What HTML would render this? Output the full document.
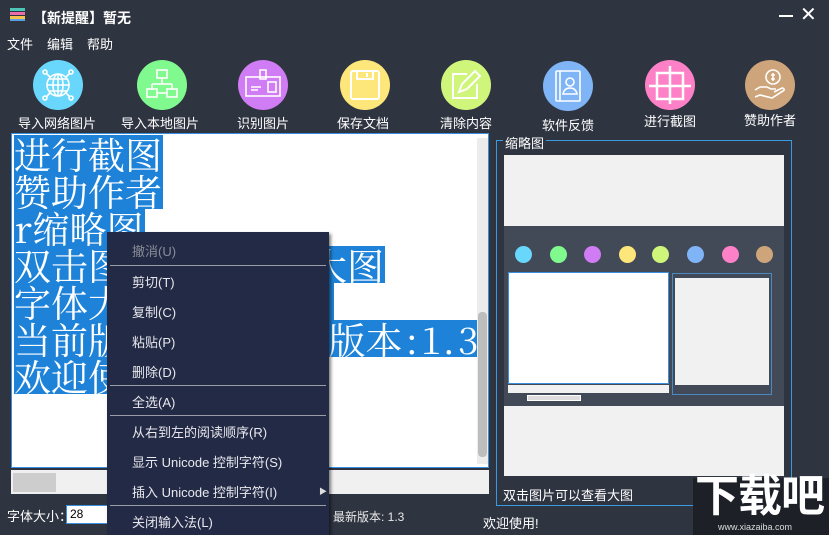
<!DOCTYPE html>
<html><head><meta charset="utf-8"><style>
*{margin:0;padding:0;box-sizing:border-box}
html,body{width:829px;height:535px;overflow:hidden}
body{background:#2f3441;position:relative;font-family:"Liberation Sans","Noto Sans CJK SC",sans-serif;color:#fff}
.a{position:absolute;white-space:nowrap}
.c{position:absolute;width:50px;height:50px;border-radius:50%}
.c svg{position:absolute;left:0;top:0}
.lb{position:absolute;font-size:13px;transform:translateX(-50%);white-space:nowrap}
.ed{position:absolute;left:11px;top:133px;width:478px;height:335px;background:#fff;border:1px solid #3a8ee0;overflow:hidden}
.ln{position:absolute;left:2px;height:37px;background:#1e83d8;font-family:"Noto Serif CJK SC","Liberation Serif",serif;font-size:37px;line-height:37px;color:#fff;white-space:nowrap;overflow:hidden}
.h{display:inline-block;width:18.5px;text-align:center}
.menu{position:absolute;left:107px;top:232px;width:222px;height:303px;background:#232a45;box-shadow:2px 2px 3px rgba(0,0,0,.5)}
.mi{position:absolute;left:25px;font-size:13px;color:#e8e8ee;white-space:nowrap}
.sep{position:absolute;left:3px;width:216px;height:1px;background:#9a9ca8}
</style></head><body>
<div class="a" style="left:10px;top:8px;width:15px;height:3px;background:#4bc7b9"></div>
<div class="a" style="left:10px;top:12px;width:15px;height:3px;background:#e96da8"></div>
<div class="a" style="left:10px;top:16px;width:15px;height:3px;background:#f4c24d"></div>
<div class="a" style="left:10px;top:19px;width:15px;height:2px;background:#5aa0e0"></div>
<div class="a" style="left:33px;top:8px;font-size:14px;font-weight:bold">【新提醒】暂无</div>
<div class="a" style="left:779px;top:15px;width:14px;height:2px;background:#fff"></div>
<div class="a" style="left:800px;top:3px;font-size:20px;line-height:24px">✕</div>
<div class="a" style="left:7px;top:34px;font-size:13px">文件</div>
<div class="a" style="left:47px;top:34px;font-size:13px">编辑</div>
<div class="a" style="left:87px;top:34px;font-size:13px">帮助</div>

<div class="c" style="left:33px;top:60px;background:#69d7fb"><svg width="50" height="50" fill="none" stroke="#fff" stroke-width="1.6"><circle cx="25" cy="25" r="11"/><ellipse cx="25" cy="25" rx="5" ry="11"/><path d="M14 25h22M16 19h18M16 31h18M25 14v22"/><path d="M17 17l-4-4M33 17l4-4M17 33l-4 4M33 33l4 4"/><circle cx="12" cy="12" r="2"/><circle cx="38" cy="12" r="2"/><circle cx="12" cy="38" r="2"/><circle cx="38" cy="38" r="2"/></svg></div>
<div class="lb" style="left:57px;top:113px">导入网络图片</div>
<div class="c" style="left:137px;top:60px;background:#80f98f"><svg width="50" height="50" fill="none" stroke="#fff" stroke-width="1.6"><rect x="20" y="10" width="10" height="8"/><path d="M25 18v6M15 24h20M15 24v5M35 24v5"/><rect x="10" y="29" width="10" height="8"/><rect x="30" y="29" width="10" height="8"/><path d="M21 33h8"/></svg></div>
<div class="lb" style="left:160px;top:113px">导入本地图片</div>
<div class="c" style="left:238px;top:60px;background:#d07cf4"><svg width="50" height="50" fill="none" stroke="#fff" stroke-width="1.6"><rect x="8" y="17" width="34" height="19"/><path d="M22 10h6v9h-6z"/><rect x="30" y="22" width="8" height="10"/><path d="M13 27h10M13 30h7"/></svg></div>
<div class="lb" style="left:263px;top:113px">识别图片</div>
<div class="c" style="left:340px;top:60px;background:#fde77b"><svg width="50" height="50" fill="none" stroke="#fff" stroke-width="2"><rect x="11" y="11" width="28" height="28" rx="2"/><path d="M17 11v8h16v-8M27 13v4"/></svg></div>
<div class="lb" style="left:363px;top:113px">保存文档</div>
<div class="c" style="left:441px;top:60px;background:#cff67a"><svg width="50" height="50" fill="none" stroke="#fff" stroke-width="2"><path d="M26 14H12v24h24V24"/><path d="M18 32l3-8 13-13 5 5-13 13z"/></svg></div>
<div class="lb" style="left:466px;top:113px">清除内容</div>
<div class="c" style="left:543px;top:61px;background:#7fb4f6"><svg width="50" height="50" fill="none" stroke="#fff" stroke-width="1.6"><rect x="13" y="10" width="24" height="30" rx="1"/><path d="M17 10v30"/><circle cx="27" cy="21" r="4"/><path d="M20 33c1-5 4-6 7-6s6 1 7 6z"/></svg></div>
<div class="lb" style="left:568px;top:115px">软件反馈</div>
<div class="c" style="left:645px;top:60px;background:#fe81c8"><svg width="50" height="50" fill="none" stroke="#fff" stroke-width="2.5"><path d="M12 13h26v26H12zM25 6v38M4 26h42"/></svg></div>
<div class="lb" style="left:670px;top:111px">进行截图</div>
<div class="c" style="left:745px;top:60px;background:#cea57b"><svg width="50" height="50" fill="none" stroke="#fff" stroke-width="1.6"><circle cx="28" cy="17" r="7"/><path d="M28 13v8M26 15h4M26 19h4"/><path d="M10 30l5-3h7l4 2h5M10 37l5-2 12 3 11-7c2-1 1-3-1-3l-8 4"/></svg></div>
<div class="lb" style="left:770px;top:110px">赞助作者</div>

<div class="ed">
<div class="ln" style="top:1px;width:149px">进行截图</div>
<div class="ln" style="top:38px;width:149px">赞助作者</div>
<div class="ln" style="top:75px;width:131px"><span class="h">r</span>缩略图</div>
<div class="ln" style="top:112px;width:371px">双击图片可以查看大图</div>
<div class="ln" style="top:149px;width:320px">字体大小：<span class="h">2</span><span class="h">8</span></div>
<div class="ln" style="top:186px;width:464px">当前版本：<span class="h">1</span><span class="h">.</span><span class="h">4</span>最新版本<span class="h">:</span><span class="h">1</span><span class="h">.</span><span class="h">3</span></div>
<div class="ln" style="top:223px;width:148px">欢迎使用</div>
<div class="a" style="left:465px;top:4px;width:11px;height:326px;background:#ececec"></div>
<div class="a" style="left:466px;top:178px;width:9px;height:145px;background:#bdbdbd;border-radius:4px"></div>
</div>
<div class="a" style="left:11px;top:470px;width:478px;height:24px;background:#f0f0f0"></div>
<div class="a" style="left:13px;top:473px;width:43px;height:19px;background:#cdcdcd"></div>

<div class="a" style="left:7px;top:506px;font-size:13px">字体大小：</div>
<div class="a" style="left:66px;top:505px;width:50px;height:19px;background:#fff;border:1px solid #3a8ee0;color:#000;font-size:12px;padding-left:3px;line-height:17px">28</div>
<div class="a" style="left:333px;top:508px;font-size:12px;color:#e8e8e8">最新版本: 1.3</div>

<div class="menu">
<div class="mi" style="top:9px;color:#8a8d99">撤消(U)</div>
<div class="sep" style="top:33px"></div>
<div class="mi" style="top:40px">剪切(T)</div>
<div class="mi" style="top:70px">复制(C)</div>
<div class="mi" style="top:100px">粘贴(P)</div>
<div class="mi" style="top:130px">删除(D)</div>
<div class="sep" style="top:153px"></div>
<div class="mi" style="top:160px">全选(A)</div>
<div class="sep" style="top:183px"></div>
<div class="mi" style="top:190px">从右到左的阅读顺序(R)</div>
<div class="mi" style="top:220px">显示 Unicode 控制字符(S)</div>
<div class="mi" style="top:250px">插入 Unicode 控制字符(I)</div>
<div class="a" style="left:212px;top:254px;font-size:8px;color:#ddd">▶</div>
<div class="sep" style="top:273px"></div>
<div class="mi" style="top:280px">关闭输入法(L)</div>
</div>

<div class="a" style="left:496px;top:140px;width:296px;height:366px;border:1px solid #3a9ae0"></div>
<div class="a" style="left:503px;top:133px;font-size:13px;background:#2f3441;padding:0 2px">缩略图</div>
<div class="a" style="left:504px;top:155px;width:280px;height:321px;background:#f1f1f2"></div>
<div class="a" style="left:504px;top:226px;width:280px;height:180px;background:#424a58"></div>
<div class="a" style="left:508px;top:272px;width:161px;height:112px;background:#fff;border:1px solid #3a8ee0"></div>
<div class="a" style="left:672px;top:273px;width:100px;height:122px;border:1px solid #4a8ac0"></div>
<div class="a" style="left:675px;top:278px;width:94px;height:107px;background:#f1f1f2"></div>
<div class="a" style="left:508px;top:385px;width:161px;height:8px;background:#f1f1f2"></div>
<div class="a" style="left:527px;top:395px;width:54px;height:6px;background:#ddd;border:1px solid #fff"></div>
<div class="c" style="left:515px;top:246px;width:17px;height:17px;background:#69d7fb"></div>
<div class="c" style="left:550px;top:246px;width:17px;height:17px;background:#80f98f"></div>
<div class="c" style="left:584px;top:246px;width:17px;height:17px;background:#d07cf4"></div>
<div class="c" style="left:619px;top:246px;width:17px;height:17px;background:#fde77b"></div>
<div class="c" style="left:652px;top:246px;width:17px;height:17px;background:#cff67a"></div>
<div class="c" style="left:687px;top:246px;width:17px;height:17px;background:#7fb4f6"></div>
<div class="c" style="left:722px;top:246px;width:17px;height:17px;background:#fe81c8"></div>
<div class="c" style="left:756px;top:246px;width:17px;height:17px;background:#cea57b"></div>
<div class="a" style="left:503px;top:485px;font-size:13px">双击图片可以查看大图</div>
<div class="a" style="left:483px;top:513px;font-size:13px">欢迎使用!</div>

<div class="a" style="left:693px;top:478px;width:136px;height:57px;background:#1d2027"></div>
<div class="a" style="left:695px;top:472px;font-size:44px;font-weight:bold;line-height:50px;letter-spacing:-1px">下载吧</div>
<div class="a" style="left:718px;top:522px;font-size:9px;color:#ddd">www.xiazaiba.com</div>
</body></html>
